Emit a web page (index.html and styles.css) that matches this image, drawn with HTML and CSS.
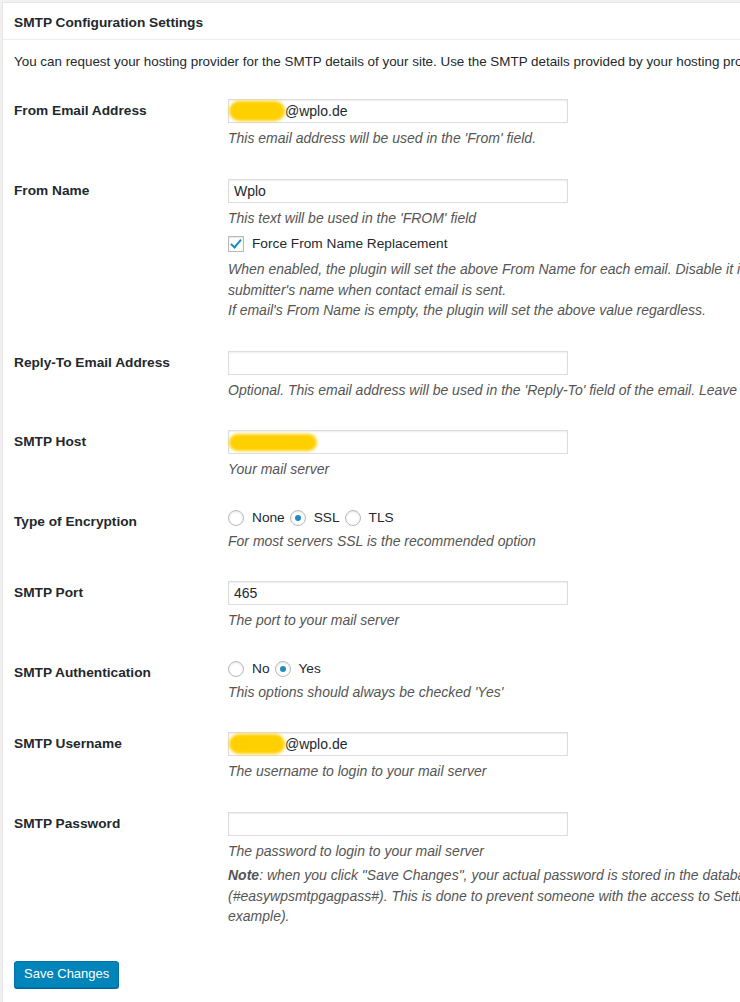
FILE: index.html
```html
<!DOCTYPE html>
<html>
<head>
    <title>SMTP Configuration Settings</title>
    <link rel="stylesheet" href="styles.css">
</head>
<body>
    <div class="postbox">
        <h3 class="hndle">SMTP Configuration Settings</h3>
        <div class="inside">
            <p class="intro">You can request your hosting provider for the SMTP details of your site. Use the SMTP details provided by your hosting provider to configure the following settings.</p>

            <table class="form-table">
                <tr>
                    <th>From Email Address</th>
                    <td>
                        <div class="field">
                            <span class="blob blob-short"></span>
                            <input type="text" class="regular-text masked" value="@wplo.de">
                        </div>
                        <p class="description">This email address will be used in the 'From' field.</p>
                    </td>
                </tr>
                <tr>
                    <th>From Name</th>
                    <td>
                        <input type="text" class="regular-text" value="Wplo">
                        <p class="description">This text will be used in the 'FROM' field</p>
                        <label class="check-line">
                            <span class="checkbox checked"></span>
                            Force From Name Replacement
                        </label>
                        <p class="description">When enabled, the plugin will set the above From Name for each email. Disable it if you're using contact form plugins, it will prevent the plugin from replacing form<br>submitter's name when contact email is sent.<br>If email's From Name is empty, the plugin will set the above value regardless.</p>
                    </td>
                </tr>
                <tr>
                    <th>Reply-To Email Address</th>
                    <td>
                        <input type="text" class="regular-text" value="">
                        <p class="description">Optional. This email address will be used in the 'Reply-To' field of the email. Leave it blank to use 'From' email as the reply-to value.</p>
                    </td>
                </tr>
                <tr>
                    <th>SMTP Host</th>
                    <td>
                        <div class="field">
                            <span class="blob blob-long"></span>
                            <input type="text" class="regular-text" value="">
                        </div>
                        <p class="description">Your mail server</p>
                    </td>
                </tr>
                <tr>
                    <th>Type of Encryption</th>
                    <td>
                        <div class="radio-line">
                            <label><span class="radio"></span> None</label>
                            <label><span class="radio checked"></span> SSL</label>
                            <label><span class="radio"></span> TLS</label>
                        </div>
                        <p class="description">For most servers SSL is the recommended option</p>
                    </td>
                </tr>
                <tr>
                    <th>SMTP Port</th>
                    <td>
                        <input type="text" class="regular-text" value="465">
                        <p class="description">The port to your mail server</p>
                    </td>
                </tr>
                <tr>
                    <th>SMTP Authentication</th>
                    <td>
                        <div class="radio-line">
                            <label><span class="radio"></span> No</label>
                            <label><span class="radio checked"></span> Yes</label>
                        </div>
                        <p class="description">This options should always be checked 'Yes'</p>
                    </td>
                </tr>
                <tr>
                    <th>SMTP Username</th>
                    <td>
                        <div class="field">
                            <span class="blob blob-short"></span>
                            <input type="text" class="regular-text masked" value="@wplo.de">
                        </div>
                        <p class="description">The username to login to your mail server</p>
                    </td>
                </tr>
                <tr>
                    <th>SMTP Password</th>
                    <td>
                        <input type="password" class="regular-text" value="">
                        <p class="description">The password to login to your mail server</p>
                        <p class="description note"><b>Note</b>: when you click "Save Changes", your actual password is stored in the database and then used to send emails. This field is replaced with a gag<br>(#easywpsmtpgagpass#). This is done to prevent someone with the access to Settings page from seeing your password (using password fields unmasking programs, for<br>example).</p>
                    </td>
                </tr>
            </table>

            <p class="submit">
                <button class="button-primary">Save Changes</button>
            </p>
        </div>
    </div>
</body>
</html>
```

FILE: styles.css
```css
body {
    margin: 0;
    padding: 2px 0 0 2px;
    background-color: #f1f1f1;
    font-family: "Liberation Sans", Arial, sans-serif;
    font-size: 13.7px;
    color: #23282d;
    overflow: hidden;
}

.postbox {
    width: 1200px;
    min-height: 1010px;
    background-color: #fff;
    border: 1px solid #e5e5e5;
    box-shadow: 0 1px 1px rgba(0,0,0,0.04);
}

.hndle {
    margin: 0;
    padding: 10px 11px 6px;
    font-size: 13.7px;
    line-height: 20px;
    font-weight: bold;
    border-bottom: 1px solid #eee;
}

.inside {
    padding: 0 11px;
}

.intro {
    margin: 12px 0 0;
    font-size: 13.4px;
    line-height: 20px;
    white-space: nowrap;
    color: #23282d;
}

.form-table {
    width: 100%;
    table-layout: fixed;
    border-collapse: collapse;
    margin-top: 12px;
}

.form-table th {
    width: 214px;
    padding: 17px 0 0;
    text-align: left;
    vertical-align: top;
    font-weight: bold;
    line-height: 20px;
    white-space: nowrap;
}

.form-table td {
    padding: 15px 0;
    vertical-align: top;
    line-height: 20px;
}

.field {
    position: relative;
    width: 340px;
}

.regular-text {
    box-sizing: border-box;
    width: 340px;
    height: 24px;
    margin: 0;
    padding: 2px 5px;
    border: 1px solid #ddd;
    box-shadow: inset 0 1px 2px rgba(0,0,0,0.07);
    font-family: "Liberation Sans", Arial, sans-serif;
    font-size: 14px;
    color: #23282d;
    background-color: #fff;
    display: block;
}

.regular-text.masked {
    padding-left: 56px;
}

.blob {
    position: absolute;
    top: 2px;
    left: 1px;
    height: 20px;
    background-color: #ffd000;
    border-radius: 12px;
    filter: blur(1.5px);
    z-index: 1;
}

.blob-short {
    width: 56px;
}

.blob-long {
    top: 4px;
    width: 88px;
    height: 17px;
}

.description {
    margin: 5px 0 0;
    font-size: 14px;
    font-style: italic;
    color: #555;
    line-height: 20.5px;
    white-space: nowrap;
}

.description.note {
    margin-top: 4px;
}

.description b {
    font-weight: bold;
}

.check-line {
    display: flex;
    align-items: center;
    gap: 8px;
    margin-top: 6px;
    height: 20px;
}

.checkbox {
    box-sizing: border-box;
    width: 16px;
    height: 16px;
    border: 1px solid #b4b9be;
    background-color: #fff;
    box-shadow: inset 0 1px 2px rgba(0,0,0,0.1);
    position: relative;
}

.checkbox.checked::after {
    content: "";
    position: absolute;
    left: 4px;
    top: 0px;
    width: 4px;
    height: 9px;
    border-right: 2px solid #1e8cbe;
    border-bottom: 2px solid #1e8cbe;
    transform: rotate(40deg);
}

.radio-line {
    display: flex;
    align-items: center;
    height: 16px;
    line-height: 16px;
}

.radio-line label {
    display: flex;
    align-items: center;
    gap: 8px;
    margin-right: 5px;
}

.radio {
    box-sizing: border-box;
    width: 16px;
    height: 16px;
    border: 1px solid #b4b9be;
    border-radius: 50%;
    background-color: #fff;
    box-shadow: inset 0 1px 2px rgba(0,0,0,0.1);
    position: relative;
}

.radio.checked::after {
    content: "";
    position: absolute;
    left: 4px;
    top: 4px;
    width: 6px;
    height: 6px;
    border-radius: 50%;
    background-color: #1e8cbe;
}

.submit {
    margin: 19px 0 0;
}

.button-primary {
    height: 27px;
    padding: 0 9px 1px;
    font-family: "Liberation Sans", Arial, sans-serif;
    font-size: 13px;
    color: #fff;
    background-color: #0085ba;
    border: 1px solid #0073aa;
    border-radius: 3px;
    box-shadow: 0 1px 0 #006799;
    cursor: pointer;
}
```
